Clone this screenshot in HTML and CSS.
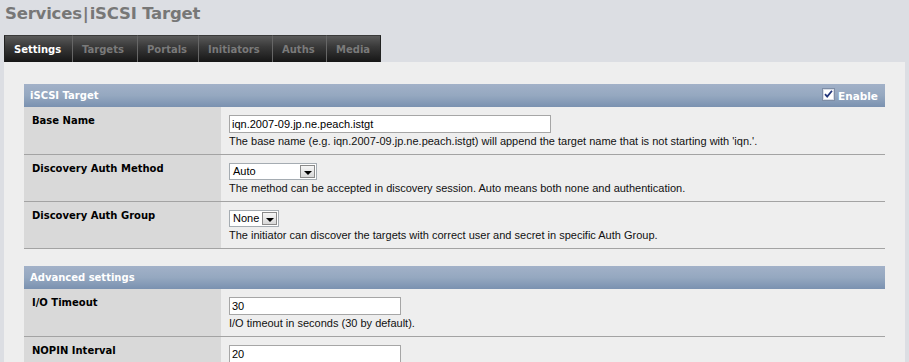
FILE: index.html
```html
<!DOCTYPE html>
<html>
<head>
<meta charset="utf-8">
<title>Services | iSCSI Target</title>
<link rel="stylesheet" href="styles.css">
</head>
<body>
<h1 class="title">Services<span class="sep">|</span>iSCSI Target</h1>
<nav class="tabs">
  <span class="tab active">Settings</span>
  <span class="tab">Targets</span>
  <span class="tab">Portals</span>
  <span class="tab">Initiators</span>
  <span class="tab">Auths</span>
  <span class="tab">Media</span>
</nav>
<div class="panel">
  <div class="table">
    <div class="head">
      <span>iSCSI Target</span>
      <span class="enable">
        <svg class="cb" width="13" height="13" viewBox="0 0 13 13"><rect x="0.5" y="0.5" width="12" height="12" fill="#fff" stroke="#7f8ea6"/><rect x="1.5" y="1.5" width="10" height="10" fill="none" stroke="#d8dde6"/><path d="M3 6.2 L5.2 8.6 L10 2.8" fill="none" stroke="#22357a" stroke-width="1.8"/></svg>
        Enable
      </span>
    </div>
    <div class="row">
      <div class="label">Base Name</div>
      <div class="value">
        <div class="input wide">iqn.2007-09.jp.ne.peach.istgt</div>
        <div class="desc">The base name (e.g. iqn.2007-09.jp.ne.peach.istgt) will append the target name that is not starting with 'iqn.'.</div>
      </div>
    </div>
    <div class="row">
      <div class="label">Discovery Auth Method</div>
      <div class="value">
        <div class="select auto"><span class="sel-text">Auto</span><span class="arrow"></span></div>
        <div class="desc">The method can be accepted in discovery session. Auto means both none and authentication.</div>
      </div>
    </div>
    <div class="row">
      <div class="label">Discovery Auth Group</div>
      <div class="value">
        <div class="select none"><span class="sel-text">None</span><span class="arrow"></span></div>
        <div class="desc">The initiator can discover the targets with correct user and secret in specific Auth Group.</div>
      </div>
    </div>
    <div class="spacer"></div>
    <div class="head"><span>Advanced settings</span></div>
    <div class="row">
      <div class="label">I/O Timeout</div>
      <div class="value">
        <div class="input short">30</div>
        <div class="desc">I/O timeout in seconds (30 by default).</div>
      </div>
    </div>
    <div class="row">
      <div class="label">NOPIN Interval</div>
      <div class="value">
        <div class="input short">20</div>
      </div>
    </div>
  </div>
</div>
</body>
</html>
```
FILE: styles.css
```css
* { box-sizing: border-box; }
html, body { margin: 0; padding: 0; }
body {
  background: #dcdee3;
  font-family: "Liberation Sans", Arial, sans-serif;
  font-size: 11px;
  color: #000;
  overflow: hidden;
}
.title {
  margin: 0;
  padding: 4px 0 0 5px;
  height: 35px;
  font-family: "DejaVu Sans", Verdana, sans-serif;
  font-weight: bold;
  font-size: 16.5px;
  line-height: 20px;
  color: #777777;
  letter-spacing: -0.2px;
}
.title .sep { margin: 0 1px; }
.tabs {
  display: flex;
  margin-left: 4px;
  height: 27px;
}
.tab {
  display: block;
  height: 27px;
  line-height: 27px;
  padding: 0 10px 0 9px;
  background: linear-gradient(#5a5a5a, #3a3a3a 40%, #161616);
  border-left: 1px solid #666;
  border-top: 1px solid #3a3a3a;
  font-family: "DejaVu Sans", Verdana, sans-serif;
  font-weight: bold;
  font-size: 10px;
  color: #7a7a7a;
}
.tab:first-child { border-left: 1px solid #222; }
.tab:last-child { border-right: 1px solid #222; }
.tab.active { color: #fff; }
.tabs .tab:nth-child(1) { width: 68px; }
.tabs .tab:nth-child(2) { width: 65px; }
.tabs .tab:nth-child(3) { width: 61px; }
.tabs .tab:nth-child(4) { width: 74px; }
.tabs .tab:nth-child(5) { width: 54px; }
.tabs .tab:nth-child(6) { width: 55px; }
.panel {
  margin: 0 4px;
  background: #eeeeee;
  padding: 22px 20px 40px 20px;
  min-height: 400px;
}
.head {
  display: flex;
  justify-content: space-between;
  align-items: center;
  height: 23px;
  padding: 0 7px 0 6px;
  background: linear-gradient(#a2b1c8, #95a8c0 50%, #7a91b0);
  color: #fff;
  font-family: "DejaVu Sans", Verdana, sans-serif;
  font-weight: bold;
  font-size: 10px;
}
.enable { display: flex; align-items: center; gap: 3px; font-size: 10.5px; }
.cb { display: block; margin-top: -2px; }
.row {
  display: flex;
  border-bottom: 1px solid #a3a3a3;
}
.label {
  width: 197px;
  flex: none;
  background: #d9d9d9;
  padding: 7px 8px 6px;
  font-family: "DejaVu Sans", Verdana, sans-serif;
  font-weight: bold;
  font-size: 10px;
  line-height: 14px;
}
.value {
  flex: 1;
  padding: 8px 8px 6px 8px;
  background: #eeeeee;
}
.input {
  height: 18px;
  background: #fff;
  border: 1px solid #a6a6a6;
  padding: 0 2px;
  line-height: 16px;
  font-size: 11px;
}
.input.wide { width: 322px; }
.input.short { width: 172px; }
.desc {
  margin-top: 1px;
  line-height: 14px;
  color: #111;
}
.select {
  display: flex;
  height: 17px;
  background: #fff;
  border: 1px solid #a5acb2;
  padding: 1px;
}
.select.auto { width: 88px; }
.select.none { width: 50px; }
.sel-text { flex: 1; padding-left: 2px; line-height: 13px; }
.arrow {
  position: relative;
  width: 15px;
  flex: none;
  background: linear-gradient(#f6f6f6, #d8d8d8);
  border: 1px solid #8a8a8a;
}
.arrow::after {
  content: "";
  position: absolute;
  left: 3px;
  top: 5px;
  border-left: 4px solid transparent;
  border-right: 4px solid transparent;
  border-top: 4px solid #000;
}
.spacer { height: 17px; }
```
